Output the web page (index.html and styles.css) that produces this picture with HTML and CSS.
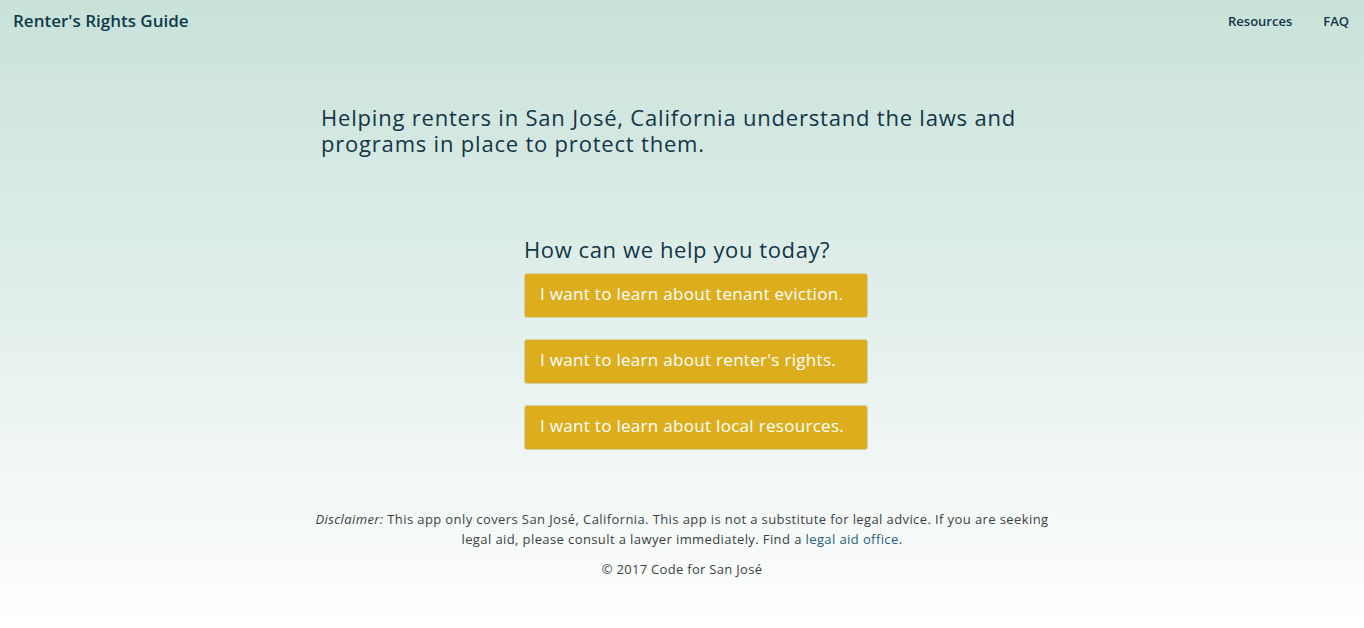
FILE: index.html
```html
<!DOCTYPE html>
<html lang="en">
<head>
<meta charset="utf-8">
<title>Renter's Rights Guide</title>
<link rel="stylesheet" href="styles.css">
</head>
<body>
<header class="topbar">
  <a class="brand" href="#">Renter's Rights Guide</a>
  <nav class="nav">
    <a href="#">Resources</a>
    <a href="#">FAQ</a>
  </nav>
</header>
<main class="main">
  <p class="lead">Helping renters in San José, California understand the laws and programs in place to protect them.</p>
  <section class="help">
    <h2 class="help-title">How can we help you today?</h2>
    <div class="choices">
      <button class="choice">I want to learn about tenant eviction.</button>
      <button class="choice">I want to learn about renter's rights.</button>
      <button class="choice">I want to learn about local resources.</button>
    </div>
  </section>
</main>
<footer class="footer">
  <p class="disclaimer"><em>Disclaimer:</em> This app only covers San José, California. This app is not a substitute for legal advice. If you are seeking legal aid, please consult a lawyer immediately. Find a <a href="#">legal aid office</a>.</p>
  <p class="copy">© 2017 Code for San José</p>
</footer>
</body>
</html>
```
FILE: styles.css
```css
html, body {
  margin: 0;
  padding: 0;
}
body {
  min-height: 628px;
  font-family: "Open Sans", Lato, sans-serif;
  color: #123646;
  background: linear-gradient(to bottom, #c8e2da 0px, #e4f0ec 330px, #ffffff 628px);
}
.topbar {
  height: 45px;
  display: flex;
  align-items: center;
  justify-content: space-between;
  padding: 0 15px 0 13px;
  box-sizing: border-box;
}
.brand {
  font-size: 17px;
  font-weight: 600;
  color: #0f3a4a;
  text-decoration: none;
  margin-top: -4px;
}
.nav {
  display: flex;
  gap: 31px;
  margin-top: -4px;
}
.nav a {
  font-size: 13px;
  font-weight: 600;
  color: #123646;
  text-decoration: none;
}
.main {
  width: 722px;
  margin: 0 auto;
}
.lead {
  margin: 59px 0 0;
  font-size: 22px;
  line-height: 26px;
  letter-spacing: 0.8px;
  color: #123646;
}
.help {
  margin: 80px 0 0 203px;
  width: 344px;
}
.help-title {
  margin: 0 0 11px;
  font-size: 22px;
  font-weight: 400;
  line-height: 26px;
  letter-spacing: 0.6px;
  color: #123646;
}
.choices {
  display: flex;
  flex-direction: column;
  gap: 21px;
}
.choice {
  height: 45px;
  width: 344px;
  text-align: left;
  padding: 0 15px 4px;
  background: #dcae1e;
  border: 1px solid #d8cfa8;
  border-radius: 3px;
  color: #ffffff;
  font-family: inherit;
  font-size: 17px;
  letter-spacing: 0.3px;
}
.footer {
  margin-top: 59px;
  text-align: center;
}
.disclaimer {
  width: 745px;
  margin: 0 auto;
  font-size: 13px;
  line-height: 20px;
  letter-spacing: 0.4px;
  color: #3a3f44;
}
.disclaimer a {
  color: #23607e;
  text-decoration: none;
}
.copy {
  margin: 10px 0 0;
  font-size: 13px;
  line-height: 20px;
  letter-spacing: 0.3px;
  color: #3a3f44;
}
```
